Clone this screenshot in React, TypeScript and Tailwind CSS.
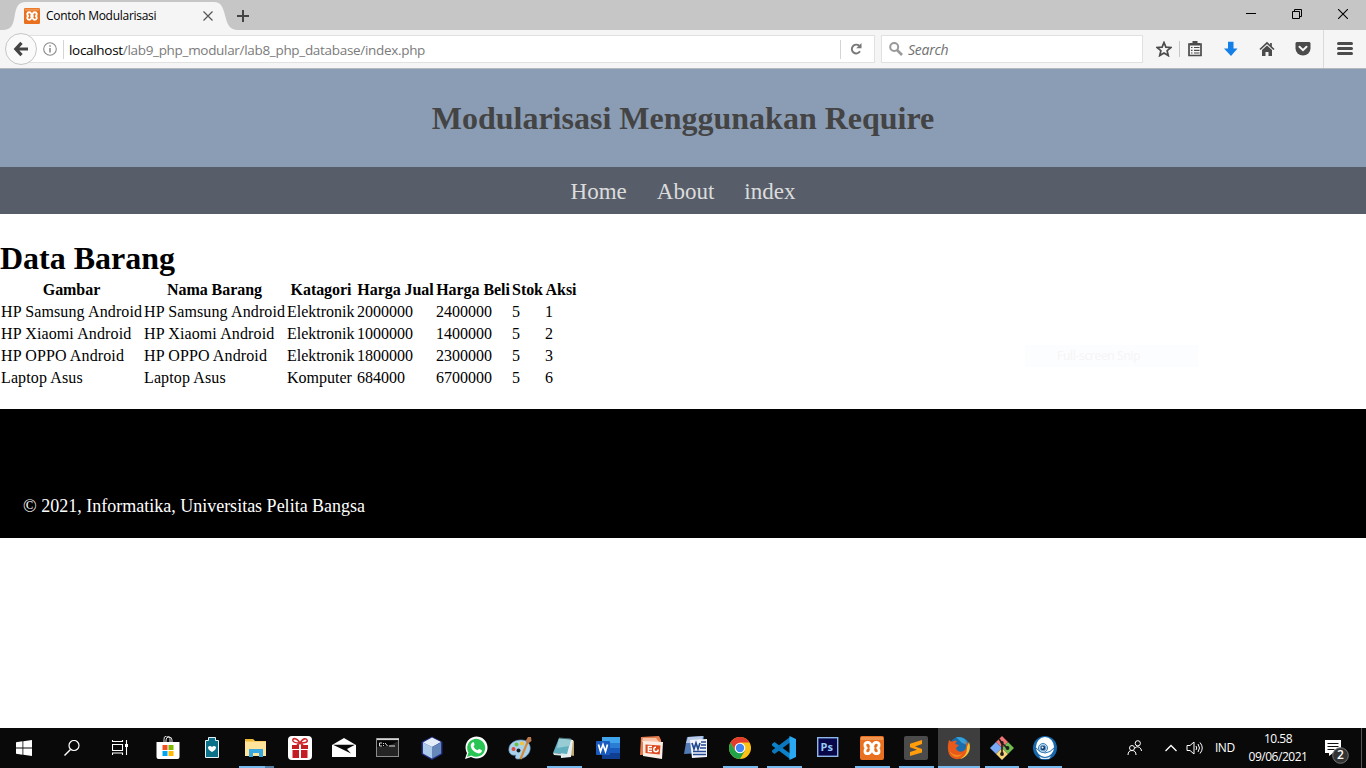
import React from "react";

type IconProps = { children: React.ReactNode; className?: string; box?: string };

function Icon({ children, className = "w-6 h-6", box = "0 0 24 24" }: IconProps) {
  return (
    <svg viewBox={box} className={`${className} block shrink-0`} fill="none">
      {children}
    </svg>
  );
}

function XamppIcon({ className = "w-6 h-6" }: { className?: string }) {
  return (
    <Icon className={className}>
      <rect width="24" height="24" rx="2" fill="#e8701f" />
      <rect x="1" y="1" width="22" height="3" fill="#f3a468" opacity=".7" />
      <path
        d="M8 6.300C4.300 6.300 4 10 6.300 12 4 14 4.300 17.700 8 17.700c3.500 0 2.500-4.200 4-4.200s.5 4.200 4 4.200c3.700 0 4-3.700 1.700-5.700C20 10 19.700 6.300 16 6.300c-3.500 0-2.500 4.200-4 4.200s-.5-4.200-4-4.200z"
        stroke="#fff"
        strokeWidth="2.800"
        strokeLinejoin="round"
      />
      <path d="M9.500 12h5" stroke="#fff" strokeWidth="2.800" />
    </Icon>
  );
}

const columns = [
  { label: "Gambar", width: "w-[143px]" },
  { label: "Nama Barang", width: "w-[143px]" },
  { label: "Katagori", width: "w-[70px]" },
  { label: "Harga Jual", width: "w-[79px]" },
  { label: "Harga Beli", width: "w-[76px]" },
  { label: "Stok", width: "w-[33px]" },
  { label: "Aksi", width: "w-[34px]" },
];

const rows = [
  ["HP Samsung Android", "HP Samsung Android", "Elektronik", "2000000", "2400000", "5", "1"],
  ["HP Xiaomi Android", "HP Xiaomi Android", "Elektronik", "1000000", "1400000", "5", "2"],
  ["HP OPPO Android", "HP OPPO Android", "Elektronik", "1800000", "2300000", "5", "3"],
  ["Laptop Asus", "Laptop Asus", "Komputer", "684000", "6700000", "5", "6"],
];

function TabBar() {
  return (
    <div className="relative flex h-[30px] bg-[#c6c6c6]">
      <svg className="absolute left-0 top-0 h-[30px] w-[240px]" viewBox="0 0 240 30">
        <path d="M3 30C11 30 13 25 14.500 17C16 7 18 2 26 2H214C221 2 223 7 225.500 17C227.500 25 230 30 238 30Z" fill="#f5f5f5" />
      </svg>
      <div className="relative flex h-full w-[232px] items-center pl-6 pt-0.5">
        <XamppIcon className="h-4 w-4" />
        <span className="ml-1.5 w-[157px] whitespace-nowrap text-[12px] leading-4 tracking-[-0.28px] text-black">Contoh Modularisasi</span>
        <Icon className="h-[10px] w-[10px]" box="0 0 10 10">
          <path d="M.5.5l9 9m0-9l-9 9" stroke="#555" strokeWidth="1.200" />
        </Icon>
      </div>
      <div className="relative flex items-center pl-[5px] pt-0.5">
        <Icon className="h-3 w-3" box="0 0 12 12">
          <path d="M6 0v12M0 6h12" stroke="#444" strokeWidth="2" />
        </Icon>
      </div>
      <div className="relative ml-auto flex items-start pr-[18px] pt-[9px]">
        <Icon className="h-[10px] w-[10px]" box="0 0 10 10">
          <path d="M0 4.500h10" stroke="#000" />
        </Icon>
        <Icon className="ml-9 h-[10px] w-[10px]" box="0 0 10 10">
          <path d="M.5 2.500h7v7h-7zM2.500 2V.5h7v7H8" stroke="#000" />
        </Icon>
        <Icon className="ml-9 h-[10px] w-[10px]" box="0 0 10 10">
          <path d="M0 0l10 10M10 0L0 10" stroke="#000" strokeWidth="1.100" />
        </Icon>
      </div>
    </div>
  );
}

function Toolbar() {
  return (
    <div className="relative flex h-[39px] items-start border-b border-[#b3b8be] bg-[#f5f5f5] pt-[5px]">
      <div className="ml-[21px] flex h-7 w-[854px] items-center border border-[#e1e1e1] bg-white pl-[21px]">
        <Icon className="h-[14px] w-[14px]" box="0 0 14 14">
          <circle cx="7" cy="7" r="6.300" stroke="#8b8b8b" strokeWidth="1.100" />
          <path d="M7 6v4.500M7 3.200v1.600" stroke="#858585" strokeWidth="1.500" />
        </Icon>
        <div className="ml-1.5 h-[19px] w-px bg-[#d5d5d5]" />
        <div className="ml-[5px] whitespace-nowrap pt-0.5 text-[13.500px] leading-5 tracking-[-0.31px] text-[#7b7b7b]">
          <span className="text-black">localhost</span>/lab9_php_modular/lab8_php_database/index.php
        </div>
        <div className="ml-auto mr-[9px] h-[19px] w-px bg-[#d5d5d5]" />
        <Icon className="mr-3 h-3 w-3" box="0 0 12 12">
          <path d="M10 8.300A4.400 4.400 0 1 1 9.200 2.800" stroke="#777" strokeWidth="1.900" />
          <path d="M11.500 0v5.200H6.200z" fill="#777" />
        </Icon>
      </div>
      <div className="absolute left-[5px] top-[3px] flex h-8 w-8 items-center justify-center rounded-full border border-[#c6c6c6] bg-[#fafafa]">
        <Icon className="h-4 w-4" box="0 0 16 16">
          <path d="M8.500 1.800L2.800 8l5.700 6.200M3 8h12" stroke="#444" strokeWidth="3.200" />
        </Icon>
      </div>
      <div className="ml-1.5 flex h-7 w-[262px] items-center border border-[#e1e1e1] bg-white pl-[7px]">
        <Icon className="h-[14px] w-[14px]" box="0 0 14 14">
          <circle cx="5.200" cy="5" r="4" stroke="#999" strokeWidth="2" />
          <path d="M8 8l5 5" stroke="#999" strokeWidth="2.600" />
        </Icon>
        <span className="ml-[5px] pt-0.5 text-[14px] italic leading-5 tracking-[-0.25px] text-[#707070]">Search</span>
      </div>
      <div className="flex h-7 items-center text-[#4b4b4b]">
        <Icon className="ml-[13px] h-4 w-4" box="0 0 16 16">
          <path d="M8 1.500l1.900 4.600 5 .4-3.800 3.200 1.200 4.900L8 12l-4.300 2.600 1.200-4.900L1.100 6.500l5-.4z" stroke="currentColor" strokeWidth="1.700" />
        </Icon>
        <div className="ml-[7px] h-4 w-px bg-[#c7c7c7]" />
        <Icon className="ml-[7px] h-4 w-4" box="0 0 16 16">
          <path d="M2 3h12v11.500H2z" fill="#f5f5f5" stroke="currentColor" strokeWidth="1.700" />
          <path d="M5.500 0h5v2H13v2.500H3V2h2.500z" fill="currentColor" />
          <path d="M4 6.500h1.500M7 6.500h5.500M4 9.300h1.500M7 9.300h5.500M4 12h1.500M7 12h5.500" stroke="currentColor" strokeWidth="1.200" />
        </Icon>
        <Icon className="ml-5 h-4 w-4" box="0 0 16 16">
          <path d="M5 .8h5.500V7.500h4L8 15 1 7.500h4z" fill="#147fe6" />
        </Icon>
        <Icon className="ml-5 h-4 w-4" box="0 0 16 16">
          <path d="M1 8.500L8 2l7 6.500M12 2v4" stroke="currentColor" strokeWidth="1.700" />
          <path d="M3 9l5-4.500L13 9v6H9.500v-4h-3v4H3z" fill="currentColor" />
        </Icon>
        <Icon className="ml-5 h-4 w-4" box="0 0 16 16">
          <path d="M1.500 1h13l1 1v5.500a7.500 7 0 0 1-15 0V2z" fill="currentColor" />
          <path d="M4.500 5.800L8 9.200l3.500-3.400" stroke="#f8f8f8" strokeWidth="2" strokeLinecap="round" />
        </Icon>
        <div className="ml-3 h-[38px] w-px bg-[#dadada]" />
        <Icon className="ml-[13px] h-4 w-4" box="0 0 16 16">
          <path d="M1.500 2.500h13M1.500 7.500h13M1.500 12.500h13" stroke="currentColor" strokeWidth="3" strokeLinecap="round" />
        </Icon>
      </div>
    </div>
  );
}

function Page() {
  return (
    <div className="relative h-[659px] bg-white font-['Liberation_Serif',serif] text-black">
      <header className="flex h-[98px] items-center justify-center">
        <div className="flex h-full w-full justify-center bg-[#8b9db4] pt-[31px]">
          <h1 className="text-[32px] font-bold leading-9 text-[#444]">Modularisasi Menggunakan Require</h1>
        </div>
      </header>
      <nav className="flex h-[47px] items-center justify-center gap-[30px] bg-[#575e6a] pt-0.5 text-[23px] leading-7 text-[#dcdcdc]">
        <a>Home</a>
        <a>About</a>
        <a>index</a>
      </nav>
      <main className="h-[195px] pt-[25px]">
        <h1 className="mb-0.5 text-[32px] font-bold leading-[38px]">Data Barang</h1>
        <table className="w-[578px] table-fixed border-collapse text-[16px] leading-[22px]">
          <thead>
            <tr className="h-[22px]">
              {columns.map((c) => (
                <th key={c.label} className={`${c.width} whitespace-nowrap p-0 text-center text-[16px] font-bold tracking-[-0.05px]`}>
                  {c.label}
                </th>
              ))}
            </tr>
          </thead>
          <tbody>
            {rows.map((r, i) => (
              <tr key={i} className="h-[22px]">
                {r.map((v, j) => (
                  <td key={j} className={`whitespace-nowrap p-0 px-px ${j < 2 ? "tracking-[0.12px]" : ""}`}>{v}</td>
                ))}
              </tr>
            ))}
          </tbody>
        </table>
      </main>
      <footer className="h-[129px] bg-black pl-[23px] pt-[87px] text-[18px] leading-5 text-white">
        © 2021, Informatika, Universitas Pelita Bangsa
      </footer>
      <div className="absolute left-[1025px] top-[276px] flex h-[22px] w-[173px] items-center bg-[#fbfdff] pl-8 font-['Open_Sans',sans-serif] text-[12px] tracking-[-0.3px] text-[#f7f4f5]">
        Full-screen Snip
      </div>
    </div>
  );
}

const apps: { name: string; cell: string; bar?: string; icon: React.ReactNode }[] = [
  {
    name: "store", cell: "w-11",
    icon: <Icon>
      <path d="M8 7V3.500a3 3 0 0 1 6-1V7M10 7V4a3 3 0 0 1 6 0v3" stroke="#ddd" strokeWidth="1" />
      <path d="M.5 6h23v15q0 2-2 2h-19q-2 0-2-2z" fill="#fff" />
      <path d="M6.500 9h5v5h-5z" fill="#f25022" /><path d="M12.500 9h5v5h-5z" fill="#7fba00" />
      <path d="M6.500 15h5v5h-5z" fill="#00a4ef" /><path d="M12.500 15h5v5h-5z" fill="#ffb900" />
    </Icon>,
  },
  {
    name: "battery", cell: "w-11",
    icon: <Icon>
      <path d="M5.500 4.500h3v-3h7v3h3v17h-13z" fill="#0b7189" stroke="#e6f2f5" />
      <path d="M12 16c-3-1.500-4-3-4-5q2-2 4 0 2-2 4 0c0 2-1 3.500-4 5z" fill="#fff" />
    </Icon>,
  },
  {
    name: "explorer", cell: "w-11", bar: "w-[35px]",
    icon: <Icon>
      <path d="M1 3h8l2 2h11v15H1z" fill="#f6ce63" /><path d="M2 6h20v14H1V5z" fill="#fde49a" />
      <path d="M1 3h8v2H1z" fill="#edb82d" />
      <path d="M5 13h14v8h-4v-4h-6v4H5z" fill="#37a9e0" />
    </Icon>,
  },
  {
    name: "gift", cell: "w-11",
    icon: <Icon>
      <rect width="24" height="24" rx="4" fill="#fff" />
      <path d="M4 9h7v4H4zM13 9h7v4h-7zM4.500 14H11v8H4.500zM13 14h6.500v8H13z" fill="#c41e24" />
      <path d="M12 7C8 1 4 2 5 5q1 2 7 2c6 0 8-1 7-3S15 2 12 7zm0 0l-3 2m3-2l3 2" stroke="#d1282d" strokeWidth="1.600" />
    </Icon>,
  },
  {
    name: "mail", cell: "w-11",
    icon: <Icon>
      <path d="M12 2l12 7v12H0V9z" fill="#fff" />
      <path d="M1 8.700h22L15 13l4 4.500z" fill="#090909" />
    </Icon>,
  },
  {
    name: "cmd", cell: "w-11",
    icon: <Icon>
      <rect x=".5" y="2.500" width="22" height="18" fill="#050505" stroke="#8b8b8b" />
      <path d="M1 3.300h22" stroke="#d5d5d5" strokeWidth="1.600" /><path d="M1 11q12 0 21-6v15H1z" fill="#444" opacity=".5" />
      <path d="M6 7H3.500v3H6M7.500 7v1m0 1v1M9 7l2.500 3M13 10h6" stroke="#ddd" />
    </Icon>,
  },
  {
    name: "cube", cell: "w-11",
    icon: <Icon>
      <path d="M12 1l10 5v12l-10 5.500L2 18V6z" fill="#263b9c" stroke="#202a75" />
      <path d="M12 1.500L21 6l-9 5L3 6.500z" fill="#e4edf7" />
      <path d="M3 6.500l9 4.500v11.500L3 17.500z" fill="#aecae9" /><path d="M21 6.500l-9 4.500v11.500l9-5z" fill="#6687ba" />
    </Icon>,
  },
  {
    name: "whatsapp", cell: "w-11",
    icon: <Icon>
      <path d="M1 23L3 17A11 11 0 1 1 7 21z" fill="#fff" />
      <path d="M3 21l1.500-4.500A9 9 0 1 1 7.500 19.500z" fill="#29c453" />
      <path d="M9 6c1 0 1.500 2 1.500 3l-1 1.500q1 2.500 4 3.800l1.500-1.300c1 0 3 1 3 2-1 3-4 3-7 1C8 14 6 11 7 8z" fill="#fff" />
    </Icon>,
  },
  {
    name: "paint", cell: "w-11",
    icon: <Icon>
      <path d="M1 15C0 8 6 4 13 4s10 5 9 10-6 9-12 9q-4 0-2-4-6 1-7-4z" fill="#a9d3ed" stroke="#6d9fc5" strokeWidth=".7" />
      <circle cx="5.500" cy="13" r="2" fill="#e04a3a" /><circle cx="8.500" cy="8.500" r="2" fill="#6cc04a" /><circle cx="14" cy="7.500" r="2" fill="#f2c230" />
      <circle cx="10.500" cy="14.500" r="2" fill="#151b25" />
      <path d="M20 5l-7.500 18" stroke="#d38a39" strokeWidth="2.200" /><path d="M17.500 5L20 1l3 0 .5 4-4 3z" fill="#b7794c" />
    </Icon>,
  },
  {
    name: "notepad", cell: "w-11", bar: "w-[35px]",
    icon: <Icon>
      <path d="M18 3l4 2v15l-5-1z" fill="#bea673" />
      <path d="M8 2l13 2-2 17-10 1z" fill="#e9eeee" />
      <path d="M7 2l12 1-4 15-14-1z" fill="#5fafbf" /><path d="M7 2l12 1-2 7-12 2z" fill="#98ccd4" />
      <path d="M1 17l14 1-1 2-12-1z" fill="#d9eaec" /><path d="M7 2l12 1" stroke="#44636a" />
    </Icon>,
  },
  {
    name: "word", cell: "w-11",
    icon: <Icon>
      <path d="M6 1h18v6H6z" fill="#41a5ee" /><path d="M6 7h18v5H6z" fill="#2b7cd3" /><path d="M6 12h18v5H6z" fill="#185abd" /><path d="M6 17h18v6H6z" fill="#103f91" />
      <rect y="5" width="14" height="14" rx="1" fill="#185abd" />
      <path d="M2.500 8.500l2 7 2.500-7 2.500 7 2-7" stroke="#fff" strokeWidth="1.700" />
    </Icon>,
  },
  {
    name: "powerpoint", cell: "w-11",
    icon: <Icon>
      <path d="M1 1l18-1 2 4v14L0 19z" fill="#e87d4f" /><path d="M3 2h13l3 4H2z" fill="#f9c2a7" />
      <path d="M3 5l20 1-1 17L3 20z" fill="#fbeee6" /><path d="M5.500 8.500l15 1-.8 9-14.200-1.500z" fill="#dd481c" />
      <path d="M12 10.500H8.300v5H12M8.300 13H12" stroke="#fff" strokeWidth="1.300" /><circle cx="16" cy="13.500" r="2.200" stroke="#fff" strokeWidth="1.600" /><path d="M16 13.500V10h4v3.500z" fill="#dd481c" />
    </Icon>,
  },
  {
    name: "word classic", cell: "w-11",
    icon: <Icon>
      <path d="M3 1l17-1-2 17-18 1z" fill="#527bb5" /><path d="M4 1l15-1-1 7H2z" fill="#b8cae7" />
      <path d="M6 4l17-1v18l-15 1z" fill="#f2f5fc" />
      <path d="M8 7l2 6 2-6 2 6 2-6" stroke="#234990" strokeWidth="1.700" /><path d="M17 6h5M17 9h5M16 12h6M9 15.500h13M9 18.500h13" stroke="#234990" strokeWidth="1.400" />
    </Icon>,
  },
  {
    name: "chrome", cell: "w-11", bar: "w-[35px]",
    icon: <Icon>
      <circle cx="12" cy="12" r="11" fill="#fbc116" />
      <path d="M2.500 6.500A11 11 0 0 1 21.500 6.500H12l-4.800 8.200z" fill="#e33b2e" />
      <path d="M2.500 6.500A11 11 0 0 0 12 23l4.800-8.200H7.200z" fill="#21a349" />
      <circle cx="12" cy="12" r="5.300" fill="#fff" /><circle cx="12" cy="12" r="4.200" fill="#4285f4" />
    </Icon>,
  },
  {
    name: "code", cell: "w-11", bar: "w-[35px]",
    icon: <Icon>
      <path d="M0 8l2.500-2L18 17.500V23L0 9.500z" fill="#0b82ca" /><path d="M0 16l2.500 2L18 6.500V1L0 14.500z" fill="#0b78bd" />
      <path d="M17.500 0L24 3v18l-6.500 3z" fill="#2aa8f1" />
    </Icon>,
  },
  {
    name: "photoshop", cell: "w-11",
    icon: <Icon>
      <rect x="1.700" y="1.700" width="20" height="18.600" fill="#07074a" stroke="#8fb7e9" strokeWidth="1.400" />
      <text x="4.500" y="15" className="font-['Open_Sans',sans-serif] text-[11px] font-bold" fill="#9acbf7">Ps</text>
    </Icon>,
  },
  { name: "xampp", cell: "w-11", bar: "w-[35px]", icon: <XamppIcon /> },
  {
    name: "sublime", cell: "w-11", bar: "w-[35px]",
    icon: <Icon>
      <rect width="24" height="24" rx="2" fill="#4b4b4b" />
      <path d="M18 4v4l-7 2.500 7 2.500v3.500L6 20v-4l7-2.300-7-2.400V7.700z" fill="#ff9d0a" />
    </Icon>,
  },
  {
    name: "firefox", cell: "w-[42px] bg-[#3e3e3e]", bar: "w-[42px]",
    icon: <Icon>
      <circle cx="12.500" cy="11.500" r="10.500" fill="#1b6dab" /><path d="M9 1q10-1 12 8l-6-2z" fill="#35a3d8" />
      <path d="M2 4l3 2q2-2 5-1L8 8l4 1-3 3c1 5 8 5 10 0 1-3-1-5-1-7 4 3 4 8 2 12-4 8-15 8-18 1C0 13 1 8 2 4z" fill="#e8591a" />
      <path d="M22 6c3 8-2 16-9 17 5-3 7-6 7-12z" fill="#f6c22d" /><path d="M2 13c2 6 8 7 13 5-3 5-11 4-13-5z" fill="#f28a1d" />
    </Icon>,
  },
  {
    name: "git", cell: "w-11", bar: "w-[34px]",
    icon: <Icon>
      <path d="M12 0l6 6-6 6-6-6z" fill="#f17373" /><path d="M6 6l6 6-6 6-6-6z" fill="#79a9f5" />
      <path d="M18 6l6 6-6 6-6-6z" fill="#71bc53" /><path d="M12 12l6 6-6 6-6-6z" fill="#f5d47a" />
      <path d="M9 3l3 4v11M12 7l5 5" stroke="#211d1c" strokeWidth="1.600" /><circle cx="12" cy="6.500" r="1.600" fill="#211d1c" /><circle cx="17.500" cy="12" r="1.900" fill="#211d1c" /><circle cx="12" cy="18" r="1.900" fill="#211d1c" />
    </Icon>,
  },
  {
    name: "camera", cell: "w-[42px]", bar: "w-[34px]",
    icon: <Icon>
      <circle cx="12" cy="12" r="12" fill="#1767ac" /><ellipse cx="12" cy="11" rx="9" ry="10" fill="#fff" />
      <path d="M6 20q6 4 12 0l-2 3H8z" fill="#dbe8f3" /><path d="M2 11q5 6 10 6t10-6" stroke="#2a6ead" />
      <circle cx="10" cy="12" r="4.500" fill="#cbdff1" stroke="#377fb8" /><circle cx="10" cy="12" r="2.800" fill="#163c6a" stroke="#69a6d8" /><circle cx="9.500" cy="11.500" r="1" fill="#fff" />
    </Icon>,
  },
];

function Taskbar() {
  return (
    <div className="relative flex h-10 items-center bg-[#090909] text-white">
      <div className="mr-0.5 flex">
        <div className="flex w-12 justify-center">
          <Icon className="h-4 w-4" box="0 0 16 16">
            <path d="M0 2.300L6.500 1.300v6.200H0zM7.300 1.200L16 0v7.500H7.300zM0 8.400h6.500v6.300L0 13.800zM7.300 8.400H16V16l-8.700-1.200z" fill="#fff" />
          </Icon>
        </div>
        <div className="flex w-12 justify-center">
          <Icon className="h-4 w-4" box="0 0 16 16">
            <circle cx="10" cy="5.500" r="5" stroke="#fff" strokeWidth="1.200" /><path d="M6.500 9.500L.5 15.500" stroke="#fff" strokeWidth="1.400" />
          </Icon>
        </div>
        <div className="flex w-12 justify-center">
          <Icon className="h-4 w-4" box="0 0 16 16">
            <path d="M.5 0v1.500h10V0M.5 4.500h10v6H.5zM.5 15v-2h10v2M14.500 0v15" stroke="#fff" strokeWidth="1.100" /><path d="M13 4h3v3h-3z" fill="#fff" />
          </Icon>
        </div>
      </div>
      {apps.map((a) => (
        <div key={a.name} className={`${a.cell} relative flex h-10 shrink-0 items-center justify-center`}>
          {a.icon}
          {a.bar && (
            <div className={`${a.bar} absolute bottom-0 h-0.5 bg-[#76b9ed]`}>
              {a.name === "explorer" && <div className="ml-auto h-0.5 w-[9px] bg-[#557fa2]" />}
            </div>
          )}
        </div>
      ))}
      <div className="ml-[61px] flex h-10 items-center">
        <Icon className="h-4 w-4" box="0 0 16 16">
          <circle cx="10.800" cy="3.300" r="2.600" stroke="#fff" /><path d="M8 8q3-3 6 1l.5 2" stroke="#fff" />
          <circle cx="5" cy="8" r="2.500" stroke="#fff" /><path d="M1 15q0-4.500 4-4.500t4 4.500" stroke="#fff" />
        </Icon>
        <Icon className="ml-[22px] h-3 w-3" box="0 0 12 12">
          <path d="M.5 9L6 3.500 11.500 9" stroke="#fff" strokeWidth="1.300" />
        </Icon>
        <Icon className="ml-[9px] h-4 w-[18px]" box="0 0 18 16">
          <path d="M1 5.500h3L8 2v12L4 10.500H1z" stroke="#fff" /><path d="M10 6q1.500 2 0 4M12 4q3 4 0 8M14 2.500q4.500 5.500 0 11" stroke="#fff" />
        </Icon>
        <span className="ml-[11px] w-5 whitespace-nowrap text-[12px] leading-4 tracking-[-0.5px]">IND</span>
        <div className="ml-3 w-[62px] whitespace-nowrap text-center text-[12px] leading-[18px] tracking-[-0.48px]">
          <div>10.58</div>
          <div>09/06/2021</div>
        </div>
      </div>
      <div className="relative ml-4 h-10 w-[26px]">
        <svg className="mt-3 h-7 w-[26px]" viewBox="0 0 26 28" fill="none">
          <path d="M0 0h16v13H8l-4 3v-3H0z" fill="#fff" /><path d="M2.500 3.500h11M2.500 6.500h11M2.500 9.500h7" stroke="#111" />
          <circle cx="15.500" cy="15.500" r="7.800" fill="#333" stroke="#777" />
        </svg>
        <span className="absolute left-3 top-[19px] text-[12px] font-semibold leading-4">2</span>
      </div>
      <div className="absolute right-1 top-0 h-10 w-px bg-[#555]" />
    </div>
  );
}

export default function App() {
  return (
    <div className="h-[768px] w-[1366px] overflow-hidden font-['Open_Sans','Noto_Sans',sans-serif]">
      <TabBar />
      <Toolbar />
      <Page />
      <Taskbar />
    </div>
  );
}
